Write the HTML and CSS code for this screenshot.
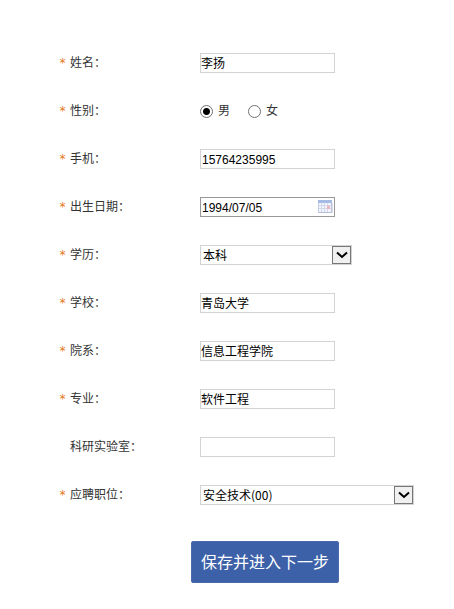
FILE: index.html
```html
<!DOCTYPE html>
<html lang="zh-CN">
<head>
<meta charset="utf-8">
<meta name="viewport" content="width=device-width, initial-scale=1">
<title>个人信息</title>
<link rel="stylesheet" href="styles.css">
</head>
<body>
<form class="form">
  <div class="row">
    <span class="star">*</span>
    <label class="label" for="name">姓名：</label>
    <input class="field" id="name" type="text" value="李扬">
  </div>
  <div class="row" role="radiogroup" aria-labelledby="gender">
    <span class="star">*</span>
    <span class="label" id="gender">性别：</span>
    <div class="options">
      <label class="option"><input class="radio" type="radio" name="gender" checked>男</label>
      <label class="option"><input class="radio" type="radio" name="gender">女</label>
    </div>
  </div>
  <div class="row">
    <span class="star">*</span>
    <label class="label" for="phone">手机：</label>
    <input class="field field-number" id="phone" type="tel" value="15764235995">
  </div>
  <div class="row">
    <span class="star">*</span>
    <label class="label" for="birth">出生日期：</label>
    <div class="control">
      <input class="field field-number field-date" id="birth" type="text" value="1994/07/05">
      <svg class="calendar" width="15" height="14" viewBox="0 0 15 14" aria-hidden="true">
        <rect x="0.5" y="0.5" width="13" height="12" fill="#f3f5fc" stroke="#c3cce6"/>
        <rect x="0" y="0" width="14" height="3" fill="#a5bbe4"/>
        <path d="M1 5.5h12M1 8.500h12M3.500 3v9M6.500 3v9M9.500 3v9" stroke="#d3d9ed" fill="none"/>
        <rect x="9" y="6" width="3" height="3" fill="#efb3bd"/>
        <path d="M1 12.500h13V3" stroke="#b5bcd6" fill="none"/>
      </svg>
    </div>
  </div>
  <div class="row">
    <span class="star">*</span>
    <label class="label" for="degree">学历：</label>
    <div class="control">
      <select class="field select select-short" id="degree"><option>本科</option></select>
      <span class="arrow"><svg width="12" height="8" viewBox="0 0 12 8" aria-hidden="true"><path d="M1 1.500L6 6l5-4.500" fill="none" stroke="#000" stroke-width="2"/></svg></span>
    </div>
  </div>
  <div class="row">
    <span class="star">*</span>
    <label class="label" for="school">学校：</label>
    <input class="field" id="school" type="text" value="青岛大学">
  </div>
  <div class="row">
    <span class="star">*</span>
    <label class="label" for="college">院系：</label>
    <input class="field" id="college" type="text" value="信息工程学院">
  </div>
  <div class="row">
    <span class="star">*</span>
    <label class="label" for="major">专业：</label>
    <input class="field" id="major" type="text" value="软件工程">
  </div>
  <div class="row">
    <span class="star"></span>
    <label class="label" for="lab">科研实验室：</label>
    <input class="field" id="lab" type="text">
  </div>
  <div class="row">
    <span class="star">*</span>
    <label class="label" for="job">应聘职位：</label>
    <div class="control">
      <select class="field select select-long" id="job"><option>安全技术(00)</option></select>
      <span class="arrow"><svg width="12" height="8" viewBox="0 0 12 8" aria-hidden="true"><path d="M1 1.500L6 6l5-4.500" fill="none" stroke="#000" stroke-width="2"/></svg></span>
    </div>
  </div>
  <button class="submit" type="submit">保存并进入下一步</button>
</form>
</body>
</html>
```
FILE: styles.css
```css
* {
  box-sizing: border-box;
}

body {
  margin: 0;
  background: #fff;
  color: #333;
  font: 12px/16px "Liberation Sans", "Noto Sans CJK SC", sans-serif;
}

.form {
  padding: 39px 20px 24px 59px;
}

.row {
  display: grid;
  grid-template-columns: 11px 130px 1fr;
  align-items: center;
  justify-items: start;
  height: 48px;
}

.star {
  color: #e67817;
  font-family: "DejaVu Sans Mono", monospace;
}

.label {
  font-family: "Noto Sans CJK SC", sans-serif;
  padding-bottom: 2px;
}

.field {
  width: 135px;
  height: 20px;
  margin: 0;
  padding: 0 0 2px;
  border: 1px solid #d3d3d3;
  border-radius: 0;
  background: #fff;
  color: #000;
  font: 12px "Liberation Sans", "Noto Sans CJK SC", sans-serif;
  outline: none;
}

.control {
  display: flex;
  position: relative;
}

.field-number {
  padding: 2px 0 0 1px;
}

.field-date {
  border-color: #999;
  padding-right: 20px;
}

.calendar {
  position: absolute;
  right: 2px;
  top: 3px;
}

.select {
  appearance: none;
  padding: 0 20px 2px 2px;
  font-family: "Noto Sans CJK SC", sans-serif;
}

.select-short {
  width: 152px;
}

.select-long {
  width: 214px;
}

.arrow {
  position: absolute;
  top: 1px;
  right: 1px;
  display: flex;
  align-items: center;
  justify-content: center;
  width: 19px;
  height: 18px;
  border: 1px solid #777;
  background: #f0f0f0;
  pointer-events: none;
}

.options {
  display: flex;
  gap: 18px;
}

.option {
  display: flex;
  align-items: center;
  gap: 5px;
}

.radio {
  appearance: none;
  width: 13px;
  height: 13px;
  margin: 0;
  border: 1px solid #707070;
  border-radius: 50%;
  background: #fff;
}

.radio:checked {
  background: radial-gradient(circle, #000 3px, #fff 4px);
}

.submit {
  display: block;
  margin: 22px 0 0 132px;
  padding: 0 9px 2px;
  height: 42px;
  border: 1px solid #4a6aac;
  border-radius: 2px;
  background: #3c61a8;
  color: #fff;
  font: 16px "Noto Sans CJK SC", sans-serif;
}
```
